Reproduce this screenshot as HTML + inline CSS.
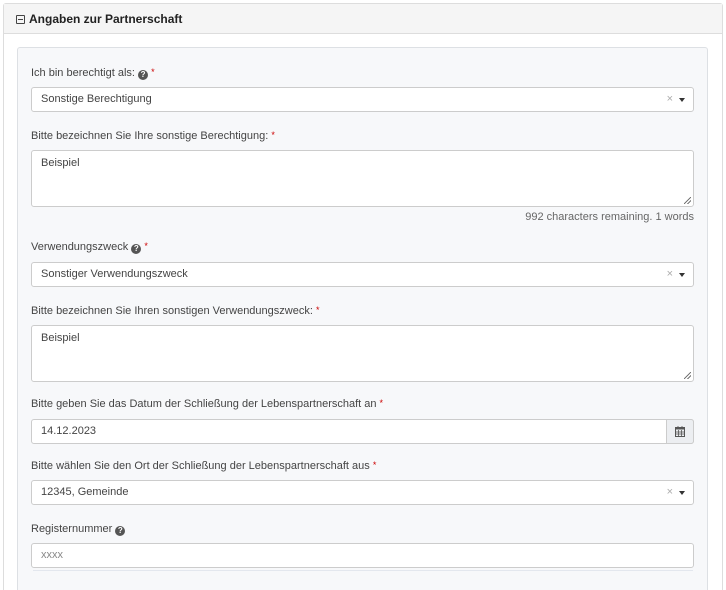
<!DOCTYPE html>
<html style="width:726px;height:590px;overflow:hidden"><head><meta charset="utf-8"><style>
*{box-sizing:border-box;margin:0;padding:0}
body{width:726px;height:590px;background:#fff;font-family:"Liberation Sans",sans-serif;font-size:11px;color:#333;position:relative;overflow:hidden}
.panel{position:absolute;left:3px;top:3px;width:720px;height:600px;border:1px solid #ddd;border-radius:3px}
.hd{height:30px;background:#f5f5f5;border-bottom:1px solid #ddd;padding:8px 0 0 12px;font-size:12px;font-weight:bold;color:#222}
.hd .ic{display:inline-block;width:9px;height:9px;border:1px solid #444;border-radius:1px;position:relative;top:1px;margin-right:4px}
.hd .ic:after{content:"";position:absolute;left:1px;right:1px;top:3px;height:1px;background:#444}
.inner{position:absolute;left:17px;top:47px;width:691px;height:560px;background:#f7f8fa;border:1px solid #dde0e4;border-radius:3px}
.lbl{position:absolute;left:31px;font-size:11px;color:#444}
.req{color:#c00;font-size:9px;vertical-align:top}
.q{display:inline-block;width:10px;height:10px;border-radius:50%;background:#555;color:#fff;font-size:8px;font-weight:bold;text-align:center;line-height:10px;vertical-align:-1px}
.box{position:absolute;left:31px;width:663px;background:#fff;border:1px solid #ccc;border-radius:3px;padding:0 9px;color:#444}
.sel{height:25px;line-height:23px}
.sel .x{position:absolute;right:20px;top:0;color:#aaa;font-size:11px}
.sel .c{position:absolute;right:8px;top:10px;border-left:3px solid transparent;border-right:3px solid transparent;border-top:4px solid #333}
.ta{height:57px;padding-top:6px}
.ta:after{content:"";position:absolute;right:2px;bottom:2px;width:7px;height:7px;background:linear-gradient(135deg,transparent 45%,#777 45%,#777 55%,transparent 55%,transparent 70%,#777 70%,#777 80%,transparent 80%)}
.cnt{position:absolute;right:32px;top:211px;color:#666}
</style></head><body>
<div class="panel"><div class="hd"><span class="ic"></span>Angaben zur Partnerschaft</div></div>
<div class="inner"></div>
<div class="lbl" style="top:67px">Ich bin berechtigt als: <span class="q">?</span> <span class="req">*</span></div>
<div class="box sel" style="top:87px">Sonstige Berechtigung<span class="x">×</span><span class="c"></span></div>
<div class="lbl" style="top:130px">Bitte bezeichnen Sie Ihre sonstige Berechtigung: <span class="req">*</span></div>
<div class="box ta" style="top:150px">Beispiel</div>
<div class="cnt">992 characters remaining. 1 words</div>
<div class="lbl" style="top:241px">Verwendungszweck <span class="q">?</span> <span class="req">*</span></div>
<div class="box sel" style="top:262px">Sonstiger Verwendungszweck<span class="x">×</span><span class="c"></span></div>
<div class="lbl" style="top:305px">Bitte bezeichnen Sie Ihren sonstigen Verwendungszweck: <span class="req">*</span></div>
<div class="box ta" style="top:325px">Beispiel</div>
<div class="lbl" style="top:398px">Bitte geben Sie das Datum der Schließung der Lebenspartnerschaft an <span class="req">*</span></div>
<div class="box sel" style="top:419px">14.12.2023<span style="position:absolute;right:-1px;top:-1px;width:28px;height:25px;background:#eceef1;border:1px solid #ccc;border-radius:0 3px 3px 0;text-align:center"><svg width="10" height="11" viewBox="0 0 10 11" style="margin-top:6px"><rect x="0.5" y="1.5" width="9" height="9" fill="none" stroke="#555"/><rect x="0.5" y="1.5" width="9" height="2" fill="#555"/><path d="M3 0v2M7 0v2M1 6h8M1 8h8M3.5 4v6M6.5 4v6" stroke="#555" stroke-width=".8"/></svg></span></div>
<div class="lbl" style="top:460px">Bitte wählen Sie den Ort der Schließung der Lebenspartnerschaft aus <span class="req">*</span></div>
<div class="box sel" style="top:480px">12345, Gemeinde<span class="x">×</span><span class="c"></span></div>
<div class="lbl" style="top:523px">Registernummer <span class="q">?</span></div>
<div class="box sel" style="top:543px;color:#888">xxxx</div>
<div style="position:absolute;left:33px;top:570px;width:660px;height:1px;background:#e3e7ee"></div>
</body></html>
